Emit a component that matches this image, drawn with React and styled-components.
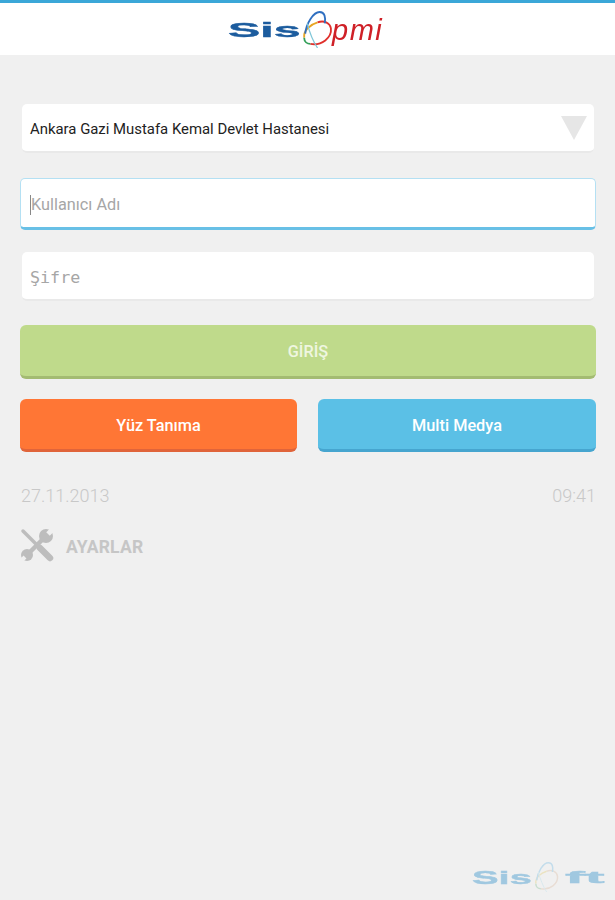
import { createGlobalStyle } from "styled-components";
import styled from "styled-components";

const GlobalStyle = createGlobalStyle`
  html, body {
    margin: 0;
    padding: 0;
    background: #f0f0f0;
  }
  * {
    box-sizing: border-box;
  }
`;

const Page = styled.div`
  width: 615px;
  height: 900px;
  display: flex;
  flex-direction: column;
  overflow: hidden;
  background: #f0f0f0;
  font-family: Roboto, "Liberation Sans", sans-serif;
`;

const Header = styled.header`
  height: 55px;
  border-top: 3px solid #3ba7d8;
  background: #fff;
  display: flex;
  align-items: center;
  padding-left: 228px;
`;

const Form = styled.main`
  display: flex;
  flex-direction: column;
  padding: 49px 19px 0 20px;
`;

const Field = styled.div`
  display: flex;
  align-items: center;
  justify-content: space-between;
  height: ${(p) => (p.$focused ? "52px" : "49px")};
  margin: ${(p) => (p.$focused ? "0" : "0 2px")};
  padding: ${(p) => (p.$focused ? "3px 9px 0" : "3px 8px 0")};
  background: #fff;
  border-radius: 5px;
  border: ${(p) => (p.$focused ? "1px solid #b4e0f3" : "none")};
  border-bottom: ${(p) => (p.$focused ? "3px solid #68c0e6" : "2px solid #e9e9e9")};
`;

const SelectText = styled.span`
  color: #222;
  font-size: 14.9px;
`;

const Arrow = styled.div`
  width: 0;
  height: 0;
  border-left: 13.5px solid transparent;
  border-right: 13.5px solid transparent;
  border-top: 24px solid #e6e6e6;
  margin: -3px -1px 0 0;
`;

const Caret = styled.span`
  display: inline-block;
  width: 1px;
  height: 20px;
  background: #888;
`;

const Placeholder = styled.span`
  display: flex;
  align-items: center;
  color: #a6a6a6;
  font-size: 16.3px;
`;

const MonoPlaceholder = styled.span`
  color: #a6a6a6;
  font-family: "DejaVu Sans Mono", "Liberation Mono", monospace;
  font-size: 16.7px;
`;

const Button = styled.button`
  display: block;
  height: ${(p) => (p.$tall ? "54px" : "53px")};
  width: ${(p) => p.$width || "100%"};
  border: none;
  border-bottom: 3px solid ${(p) => p.$edge};
  border-radius: 6px;
  background: ${(p) => p.$color};
  color: ${(p) => p.$text || "#fff"};
  font-family: inherit;
  font-size: 16.3px;
  font-weight: 500;
  padding: 2px 0 0;
`;

const ButtonRow = styled.div`
  display: flex;
  justify-content: space-between;
`;

const InfoRow = styled.div`
  display: flex;
  justify-content: space-between;
  color: #c8c8c8;
  font-size: 18px;
  font-weight: 300;
  line-height: 22px;
  padding-left: 1px;
`;

const Settings = styled.div`
  display: flex;
  align-items: center;
  gap: 12px;
`;

const SettingsLabel = styled.span`
  color: #c6c6c6;
  font-size: 17.5px;
  font-weight: 700;
  letter-spacing: 0.2px;
  padding-top: 4px;
`;

const Spacer = styled.div`
  height: ${(p) => p.$h}px;
`;

const LogoWrap = styled.div`
  display: flex;
  align-items: center;
  opacity: ${(p) => p.$opacity || 1};
  filter: blur(0.4px);
`;

const LogoWide = styled.span`
  font-family: "Liberation Sans", Arial, sans-serif;
  font-weight: 700;
  font-size: ${(p) => p.$size}px;
  line-height: 1;
  color: ${(p) => p.$color};
  display: inline-block;
  transform: scaleX(${(p) => p.$stretch});
  transform-origin: left center;
  width: ${(p) => p.$width}px;
  margin-left: ${(p) => p.$gap || 0}px;
  -webkit-text-stroke: 0.4px ${(p) => p.$color};
`;

const LogoEnd = styled.span`
  font-family: "Liberation Sans", Arial, sans-serif;
  font-style: italic;
  font-size: 29px;
  line-height: 1;
  color: #cf2027;
  letter-spacing: 1.5px;
  margin: 3px 0 0 -2px;
`;

const Footer = styled.footer`
  margin-top: auto;
  display: flex;
  justify-content: flex-end;
  padding: 0 8px 8px 0;
`;

// the atom mark in the middle of both logos
function Orbits({ size, faded }) {
  return (
    <svg width={size} height={size} viewBox="0 0 36 36" fill="none" strokeWidth="1.8" opacity={faded ? 0.65 : 1}>
      <path d="M13 32C24 34 34 26 33 17C32 11 26 9 20 11" stroke={faded ? "#e0c8b4" : "#e0302c"} />
      <path d="M20 11C13 13 6 19 7 26" stroke={faded ? "#e6d48a" : "#e8a422"} />
      <path d="M7 26C7 30 10 32 13 32" stroke={faded ? "#9bc9a8" : "#35a05a"} />
      <path d="M8 22C9 12 16 1 22 1C27 1 28 6 27 12" stroke={faded ? "#8fc6e6" : "#2f6fc0"} />
      <path d="M10 12C12 20 16 30 20 36" stroke={faded ? "#bfe0ea" : "#7fc6d8"} strokeWidth="1.2" />
    </svg>
  );
}

function ToolsIcon() {
  return (
    <svg width="34" height="34" viewBox="0 0 34 34" fill="none" strokeLinecap="round">
      <path d="M3 3L18 18" stroke="#bdbdbd" strokeWidth="3.5" />
      <path d="M20 20L30 30" stroke="#bdbdbd" strokeWidth="6.5" />
      <path d="M8 26L25 9" stroke="#bdbdbd" strokeWidth="4.5" />
      <circle cx="26" cy="8" r="7" fill="#bdbdbd" />
      <circle cx="7" cy="27" r="6" fill="#bdbdbd" />
      <path d="M28 6L34 0" stroke="#f0f0f0" strokeWidth="5" strokeLinecap="butt" />
      <path d="M5 29L1 33" stroke="#f0f0f0" strokeWidth="4" strokeLinecap="butt" />
    </svg>
  );
}

export default function App() {
  return (
    <Page>
      <GlobalStyle />
      <Header>
        <LogoWrap>
          <LogoWide $size={21} $color="#1c5c9e" $stretch={2.3} $width={69}>Sis</LogoWide>
          <Orbits size={37} />
          <LogoEnd>pmi</LogoEnd>
        </LogoWrap>
      </Header>
      <Form>
        <Field>
          <SelectText>Ankara Gazi Mustafa Kemal Devlet Hastanesi</SelectText>
          <Arrow />
        </Field>
        <Spacer $h={25} />
        <Field $focused>
          <Placeholder><Caret />Kullanıcı Adı</Placeholder>
        </Field>
        <Spacer $h={22} />
        <Field>
          <MonoPlaceholder>Şifre</MonoPlaceholder>
        </Field>
        <Spacer $h={24} />
        <Button $tall $color="#bfda8b" $edge="#a3bb72" $text="#eff6e0">GİRİŞ</Button>
        <Spacer $h={20} />
        <ButtonRow>
          <Button $width="277px" $color="#ff7635" $edge="#e0643a">Yüz Tanıma</Button>
          <Button $width="278px" $color="#5bc0e6" $edge="#46a5cf">Multi Medya</Button>
        </ButtonRow>
        <Spacer $h={33} />
        <InfoRow>
          <span>27.11.2013</span>
          <span>09:41</span>
        </InfoRow>
        <Spacer $h={21} />
        <Settings>
          <ToolsIcon />
          <SettingsLabel>AYARLAR</SettingsLabel>
        </Settings>
      </Form>
      <Footer>
        <LogoWrap $opacity={0.7}>
          <LogoWide $size={19} $color="#7fb8da" $stretch={2.1} $width={58}>Sis</LogoWide>
          <Orbits size={30} faded />
          <LogoWide $size={17} $color="#7fb8da" $stretch={3.5} $width={42} $gap={5}>ft</LogoWide>
        </LogoWrap>
      </Footer>
    </Page>
  );
}
